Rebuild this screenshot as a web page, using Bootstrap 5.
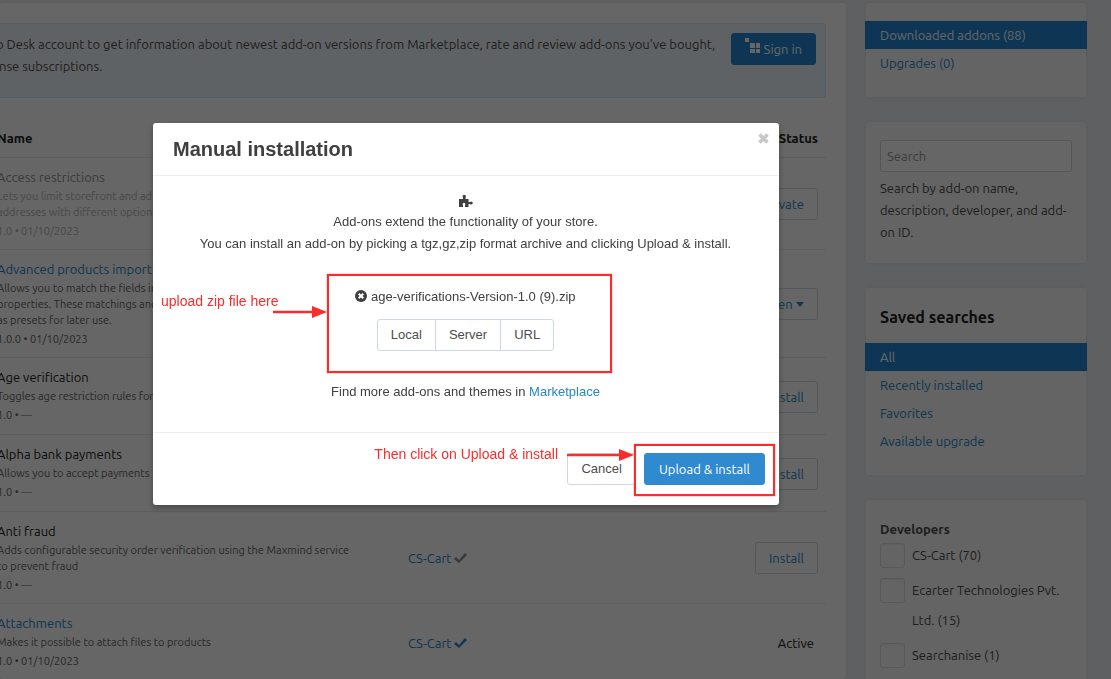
<!DOCTYPE html>
<html lang="en">
<head>
<meta charset="utf-8">
<meta name="viewport" content="width=device-width, initial-scale=1">
<title>Downloaded add-ons</title>
<link href="https://cdn.jsdelivr.net/npm/bootstrap@5.3.0/dist/css/bootstrap.min.css" rel="stylesheet">
<style>
  body { font: 13px/22px Ubuntu, "Noto Sans", sans-serif; color: #4d4d4d; background: #edf1f5; overflow: hidden; }
  a { color: #2388c9; text-decoration: none; }
  .page { height: 100vh; overflow: hidden; padding: 3px 24px 0 0; gap: 19px; }
  .content-pane { background: #fff; border-radius: 3px; padding: 20px 20px 0 0; min-width: 0; box-shadow: 0 0 5px rgba(0,0,0,.06); }
  .btn { font: inherit; height: 32px; padding: 4px 13px; border-radius: 3px; white-space: nowrap; }
  .btn-main { background: #2388d1; border-color: #2388d1; color: #fff; }
  .btn-line { background: #fff; border-color: #cfd8e0; color: #4d4d4d; }
  .notice { background: #eef6fb; border: 1px solid #cfe6f5; border-left: 0; padding: 9px 9px 9px 0; border-radius: 0 3px 3px 0; height: 75px; }
  .notice p { margin: 0 0 0 -4px; white-space: nowrap; }
  .addons { margin: 29px 0 0 -11px; width: calc(100% + 11px); }
  .addons th, .addons td { padding: 8px; border-bottom: 1px solid #ebebeb; vertical-align: middle; white-space: nowrap; }
  .addons th { padding: 0 8px 8px; color: #222; font-weight: 700; }
  .addons td { padding-bottom: 7px; height: 77px; }
  .addons td:first-child { vertical-align: top; }
  .addons .btn { color: #2388c9; }
  .addons .dropdown-toggle::after { border-width: 5px 4px 0; vertical-align: 2px; }
  .addons svg { vertical-align: -1px; }
  .name-col { width: 411px; }
  .addon-title { color: #222; }
  .addon-note, .addon-version { font-size: 11px; color: #666; }
  .addon-note { line-height: 16px; }
  .faded { opacity: .5; }
  .side { width: 222px; gap: 25px; }
  .side-box { background: #fafafa; border-radius: 3px; margin: 0 1px; padding: 18px 14px 20px; box-shadow: 0 0 5px rgba(0,0,0,.08); }
  .side-links { margin: 0 -15px; }
  .side-links a { padding: 3px 15px; }
  .side-links .current { background: #2388d1; color: #fff; }
  .side-box h2 { font-size: 16px; line-height: 22px; font-weight: 700; color: #222; margin: 0 0 15px; }
  .side-box h3 { font-size: 13px; line-height: 22px; font-weight: 700; margin: 0; }
  .side-box .form-control { font: inherit; height: 32px; padding: 4px 6px; margin-bottom: 5px; border-color: #d4d4d4; border-radius: 3px; }
  .side-box .form-control::placeholder { color: #999; }
  .pick { line-height: 30px; gap: 7px; margin-bottom: 5px; }
  .pick input { width: 25px; height: 25px; flex: none; margin: 3px 0 0; appearance: none; border: 1px solid #ddd; border-radius: 3px; background: #fafafa; box-shadow: inset 0 1px 2px rgba(0,0,0,.06); }
  .modal-backdrop { --bs-backdrop-opacity: .6; }
  .modal { font-family: "Liberation Sans", sans-serif; }
  .modal-dialog { max-width: 626px; margin: 123px 0 0 153px; }
  .modal-content { border: 0; border-radius: 3px; color: #404040; box-shadow: 0 3px 7px rgba(0,0,0,.3); }
  .modal-header { padding: 15px 10px 15px 20px; border-color: #eee; align-items: flex-start; height: 53px; }
  .modal-title { font-size: 20px; line-height: 22px; font-weight: 700; }
  .x-close { border: 0; background: none; padding: 0; line-height: 0; margin-top: -5px; }
  .modal-body { padding: 13px 11px 29px 10px; text-align: center; }
  .file-remove { vertical-align: -1px; }
  .modal-footer { padding: 20px 14px; border-color: #eee; gap: 8px; }
  .modal-footer > * { margin: 0; }
  .modal-footer .btn-main { font-family: Ubuntu, "Noto Sans", sans-serif; padding: 4px 14px; }
  .modal .btn-main { background: #2f8ad0; border-color: #2f8ad0; }
  .upload-zone { margin-top: 31px; }
  .upload-zone .btn-group { margin: 11px 0 0; }
  .market { margin-top: 30px; }
  .hint { position: absolute; color: #fa2c2c; font-size: 14px; line-height: 20px; white-space: nowrap; }
  .frame { position: absolute; border: 2px solid #fa2c2c; box-shadow: 0 0 1px #fa2c2c; pointer-events: none; }
  .arrow { position: absolute; fill: #fa2c2c; }
</style>
</head>
<body>
<div class="page d-flex">
  <main class="content-pane flex-grow-1">
    <div class="notice d-flex justify-content-between align-items-start">
      <p>p Desk account to get information about newest add-on versions from Marketplace, rate and review add-ons you've bought,<br>&nbsp;nse subscriptions.</p>
      <button class="btn btn-main" type="button"><svg width="16" height="16" viewBox="0 0 16 16" fill="currentColor" class="align-top"><path d="M0 0h4v4H0zM5 5h5v5H5zM11 5h4v5h-4zM5 11h5v4H5zM11 11h4v4h-4z"/></svg> Sign in</button>
    </div>
    <table class="addons">
      <thead><tr><th class="name-col">Name</th><th></th><th class="text-end">Status</th></tr></thead>
      <tbody>
        <tr>
          <td><div class="faded"><div class="addon-title">Access restrictions</div><div class="addon-note">Lets you limit storefront and ad<br>addresses with different option</div><div class="addon-version">1.0 • 01/10/2023</div></div></td>
          <td></td><td class="text-end"><button class="btn btn-line" type="button">Activate</button></td>
        </tr>
        <tr>
          <td><a href="#">Advanced products import</a><div class="addon-note">Allows you to match the fields in<br>properties. These matchings and<br>as presets for later use.</div><div class="addon-version">1.0.0 • 01/10/2023</div></td>
          <td></td><td class="text-end"><button class="btn btn-line dropdown-toggle" type="button">Open</button></td>
        </tr>
        <tr>
          <td><div class="addon-title">Age verification</div><div class="addon-note">Toggles age restriction rules for</div><div class="addon-version">1.0 • —</div></td>
          <td></td><td class="text-end"><button class="btn btn-line" type="button">Install</button></td>
        </tr>
        <tr>
          <td><div class="addon-title">Alpha bank payments</div><div class="addon-note">Allows you to accept payments</div><div class="addon-version">1.0 • —</div></td>
          <td></td><td class="text-end"><button class="btn btn-line" type="button">Install</button></td>
        </tr>
        <tr>
          <td><div class="addon-title">Anti fraud</div><div class="addon-note">Adds configurable security order verification using the Maxmind service<br>to prevent fraud</div><div class="addon-version">1.0 • —</div></td>
          <td><a href="#">CS-Cart</a> <svg width="13" height="11" viewBox="0 0 13 11" fill="#8c8c8c"><path d="M0 6l2-2 3 3L11 0l2 2-8 8z"/></svg></td>
          <td class="text-end"><button class="btn btn-line" type="button">Install</button></td>
        </tr>
        <tr>
          <td><a href="#">Attachments</a><div class="addon-note">Makes it possible to attach files to products</div><div class="addon-version">1.0 • 01/10/2023</div></td>
          <td><a href="#">CS-Cart</a> <svg width="13" height="11" viewBox="0 0 13 11" fill="#2388d1"><path d="M0 6l2-2 3 3L11 0l2 2-8 8z"/></svg></td>
          <td class="text-end"><span class="addon-title pe-1">Active</span></td>
        </tr>
      </tbody>
    </table>
  </main>

  <aside class="side d-flex flex-column flex-shrink-0">
    <nav class="side-box">
      <div class="side-links d-flex flex-column"><a class="current" href="#">Downloaded addons (88)</a><a href="#">Upgrades (0)</a></div>
    </nav>
    <section class="side-box">
      <input class="form-control" type="search" placeholder="Search" aria-label="Search add-ons">
      <div>Search by add-on name, description, developer, and add-on ID.</div>
    </section>
    <nav class="side-box">
      <h2>Saved searches</h2>
      <div class="side-links d-flex flex-column"><a class="current" href="#">All</a><a href="#">Recently installed</a><a href="#">Favorites</a><a href="#">Available upgrade</a></div>
    </nav>
    <section class="side-box">
      <h3>Developers</h3>
      <label class="pick d-flex"><input type="checkbox"><span>CS-Cart (70)</span></label>
      <label class="pick d-flex"><input type="checkbox"><span>Ecarter Technologies Pvt. Ltd. (15)</span></label>
      <label class="pick d-flex"><input type="checkbox"><span>Searchanise (1)</span></label>
    </section>
  </aside>
</div>

<div class="modal-backdrop show"></div>
<div class="modal d-block" role="dialog" aria-labelledby="dialog-title">
  <div class="modal-dialog">
    <div class="modal-content">
      <div class="modal-header">
        <h1 class="modal-title" id="dialog-title">Manual installation</h1>
        <button class="x-close" type="button" aria-label="Close"><svg width="11" height="11" viewBox="0 0 11 11"><path d="M1.500 1.500l8 8M9.500 1.500l-8 8" stroke="#c8c8c8" stroke-width="3.600"/></svg></button>
      </div>
      <div class="modal-body">
        <div><svg width="14" height="13" viewBox="0 0 14 13" fill="#404040"><path d="M0 5h4V3.500A1.600 1.600 0 1 1 6.500 3.500V5h3v3h1.600a1.500 1.500 0 1 1 0 2H9.500v3H6v-2a1.300 1.300 0 1 0-2 0v2H0z"/></svg></div>
        <div>Add-ons extend the functionality of your store.</div>
        <div>You can install an add-on by picking a tgz,gz,zip format archive and clicking Upload &amp; install.</div>
        <div class="upload-zone position-relative">
          <div><svg class="file-remove" width="12" height="12" viewBox="0 0 12 12"><circle cx="6" cy="6" r="6" fill="#404040"/><path d="M3.700 3.700l4.600 4.600M8.300 3.700L3.700 8.300" stroke="#fff" stroke-width="2"/></svg> age-verifications-Version-1.0 (9).zip</div>
          <div class="btn-group"><button class="btn btn-line" type="button">Local</button><button class="btn btn-line" type="button">Server</button><button class="btn btn-line" type="button">URL</button></div>
          <div class="frame" style="left:164px;top:-12px;width:285px;height:99px"></div>
          <span class="hint" style="left:-2px;top:5px">upload zip file here</span>
          <svg class="arrow" style="left:110px;top:20px" width="54" height="12" viewBox="0 0 54 12"><path d="M0 4.800h39V0l15 6-15 6V7.200H0z"/></svg>
        </div>
        <div class="market">Find more add-ons and themes in <a href="#">Marketplace</a></div>
      </div>
      <div class="modal-footer position-relative">
        <button class="btn btn-line" type="button">Cancel</button>
        <button class="btn btn-main" type="button">Upload &amp; install</button>
        <div class="frame" style="right:4px;top:11px;width:141px;height:52px"></div>
        <span class="hint" style="right:221px;top:11px">Then click on Upload &amp; install</span>
        <svg class="arrow" style="right:145px;top:16px" width="67" height="12" viewBox="0 0 67 12"><path d="M0 4.800h52V0l15 6-15 6V7.200H0z"/></svg>
      </div>
    </div>
  </div>
</div>
<script src="https://cdn.jsdelivr.net/npm/bootstrap@5.3.0/dist/js/bootstrap.bundle.min.js"></script>
</body>
</html>
